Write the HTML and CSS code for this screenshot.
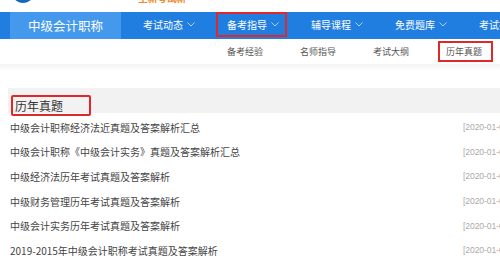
FILE: index.html
```html
<!DOCTYPE html>
<html lang="zh">
<head>
<meta charset="utf-8">
<link rel="stylesheet" href="styles.css">
</head>
<body>
<div class="top">
  <div class="logo"></div>
  <div class="promo"><span class="promo-text">全新考试新</span></div>
</div>
<nav class="nav">
  <div class="brand">中级会计职称</div>
  <ul class="menu">
    <li class="menu-item">考试动态<svg class="chev" viewBox="0 0 8 5"><path d="M0.5 0.5 L4 4 L7.5 0.5" /></svg></li>
    <li class="menu-item active">备考指导<svg class="chev" viewBox="0 0 8 5"><path d="M0.5 0.5 L4 4 L7.5 0.5" /></svg></li>
    <li class="menu-item">辅导课程<svg class="chev" viewBox="0 0 8 5"><path d="M0.5 0.5 L4 4 L7.5 0.5" /></svg></li>
    <li class="menu-item">免费题库<svg class="chev" viewBox="0 0 8 5"><path d="M0.5 0.5 L4 4 L7.5 0.5" /></svg></li>
    <li class="menu-item">考试报名<svg class="chev" viewBox="0 0 8 5"><path d="M0.5 0.5 L4 4 L7.5 0.5" /></svg></li>
  </ul>
</nav>
<div class="subnav">
  <span class="sub-item">备考经验</span>
  <span class="sub-item">名师指导</span>
  <span class="sub-item">考试大纲</span>
  <span class="sub-item active">历年真题</span>
</div>
<div class="shade"></div>
<section class="section">
  <div class="sec-head"><span class="sec-title">历年真题</span></div>
  <ul class="list">
    <li class="row"><span class="row-title">中级会计职称经济法近真题及答案解析汇总</span><span class="date">[2020-01-06]</span></li>
    <li class="row"><span class="row-title">中级会计职称《中级会计实务》真题及答案解析汇总</span><span class="date">[2020-01-06]</span></li>
    <li class="row"><span class="row-title">中级经济法历年考试真题及答案解析</span><span class="date">[2020-01-06]</span></li>
    <li class="row"><span class="row-title">中级财务管理历年考试真题及答案解析</span><span class="date">[2020-01-06]</span></li>
    <li class="row"><span class="row-title">中级会计实务历年考试真题及答案解析</span><span class="date">[2020-01-06]</span></li>
    <li class="row"><span class="row-title">2019-2015年中级会计职称考试真题及答案解析</span><span class="date">[2020-01-06]</span></li>
  </ul>
</section>
</body>
</html>
```
FILE: styles.css
```css
* { box-sizing: border-box; }
html, body { margin: 0; padding: 0; }
body {
  width: 500px;
  height: 266px;
  overflow: hidden;
  background: #fff;
  font-family: "Microsoft YaHei", "Noto Sans CJK SC", "Liberation Sans", sans-serif;
  color: #333;
}
ul { list-style: none; margin: 0; padding: 0; }

.top {
  position: relative;
  height: 12px;
  overflow: hidden;
}
.logo {
  position: absolute;
  left: 14px;
  top: -10px;
  width: 18px;
  height: 13px;
  border-radius: 50%;
  background: #1467c0;
}
.promo {
  position: absolute;
  left: 138px;
  top: -8px;
  width: 46px;
  height: 14px;
}
.promo-text {
  display: block;
  font-size: 10px;
  line-height: 12px;
  font-weight: bold;
  color: #f08a2c;
  white-space: nowrap;
  letter-spacing: -0.5px;
}

.nav {
  display: flex;
  height: 27px;
  background: #1f7ee0;
  padding-left: 10px;
}
.brand {
  width: 111px;
  flex: none;
  background: #4499ec;
  color: #fff;
  font-size: 12.5px;
  line-height: 27px;
  text-align: center;
}
.menu {
  display: flex;
  gap: 13px;
  margin-left: 11px;
  white-space: nowrap;
}
.menu-item {
  width: 71px;
  flex: none;
  display: flex;
  align-items: center;
  padding-left: 11px;
  color: #fff;
  font-size: 10px;
  height: 25px;
}
.menu-item.active {
  border: 2px solid #e0282a;
  padding-left: 9px;
}
.chev {
  width: 8px;
  height: 5px;
  margin-left: 4px;
  fill: none;
  stroke: #c4dcf6;
  stroke-width: 0.9;
}

.subnav {
  display: flex;
  gap: 18px;
  height: 25px;
  align-items: center;
  padding-left: 219px;
  font-size: 9px;
  color: #555;
}
.sub-item {
  width: 55px;
  flex: none;
  padding-left: 8px;
  white-space: nowrap;
}
.sub-item.active {
  border: 2px solid #e0282a;
  height: 21px;
  line-height: 17px;
  padding-left: 6px;
}
.shade {
  height: 6px;
  background: linear-gradient(#f3f3f3, #fafafa 70%, #fff);
}

.section {
  padding-top: 18px;
  padding-left: 8px;
}
.sec-head {
  height: 25px;
  background: #f2f2f2;
  padding-top: 4px;
  padding-left: 3px;
}
.sec-title {
  display: inline-block;
  width: 80px;
  height: 21px;
  border: 2px solid #e0282a;
  border-radius: 2px;
  font-size: 12px;
  line-height: 17px;
  padding-left: 2px;
  color: #333;
}
.list {
  padding-top: 2px;
}
.row {
  display: flex;
  justify-content: space-between;
  height: 24.6px;
  align-items: center;
  padding-left: 2px;
  white-space: nowrap;
}
.row-title {
  font-size: 10px;
  color: #444;
}
.date {
  font-family: "Liberation Sans", sans-serif;
  font-size: 8.6px;
  letter-spacing: -0.1px;
  color: #aaa;
  width: 37px;
  overflow: hidden;
  flex: none;
}
```
